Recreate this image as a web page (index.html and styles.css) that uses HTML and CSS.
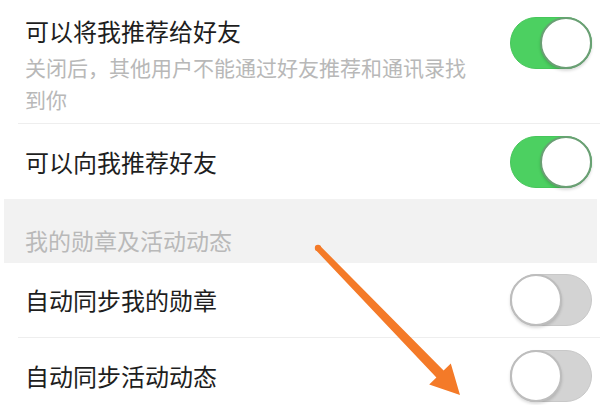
FILE: index.html
```html
<!DOCTYPE html>
<html lang="zh-CN">
<head>
  <meta charset="UTF-8">
  <meta name="viewport" content="width=device-width, initial-scale=1.0">
  <title>隐私设置</title>
  <link rel="stylesheet" href="styles.css">
</head>
<body>

  <div class="page">
    <div class="row row-top">
      <div class="text">
        <div class="title">可以将我推荐给好友</div>
        <div class="desc">关闭后，其他用户不能通过好友推荐和通讯录找到你</div>
      </div>
      <div class="switch on"><span class="knob"></span></div>
    </div>

    <div class="row last">
      <div class="text">
        <div class="title">可以向我推荐好友</div>
      </div>
      <div class="switch on"><span class="knob"></span></div>
    </div>

    <div class="section">我的勋章及活动动态</div>

    <div class="row">
      <div class="text">
        <div class="title">自动同步我的勋章</div>
      </div>
      <div class="switch"><span class="knob"></span></div>
    </div>

    <div class="row last">
      <div class="text">
        <div class="title">自动同步活动动态</div>
      </div>
      <div class="switch"><span class="knob"></span></div>
    </div>

    <!-- 橙色提示箭头 -->
    <svg class="arrow" width="600" height="405" viewBox="0 0 600 405">
      <circle cx="318" cy="248" r="3.2" fill="#f47a28"/>
      <polygon fill="#f47a28" points="320.2,245.9 443.6,370.5 450.8,363.6 460,395 429.2,384.4 436.4,377.5 315.8,250.1"/>
    </svg>
  </div>

</body>
</html>
```

FILE: styles.css
```css
body {
  margin: 0;
  background: #ffffff;
  font-family: "Noto Sans CJK SC", "Noto Sans", sans-serif;
}
.page {
  position: relative;
  width: 600px;
  height: 405px;
  overflow: hidden;
}
.row {
  display: flex;
  align-items: center;
  height: 75px;
  margin-left: 18px;
  padding: 0 8px 0 7px;
  border-bottom: 1px solid #eeeeee;
  box-sizing: border-box;
}
.row.last {
  border-bottom: none;
}
.row-top {
  align-items: flex-start;
  height: 124px;
  padding-top: 15px;
}
.row-top .switch {
  margin-top: 2px;
}
.text {
  flex: 1;
}
.title {
  font-size: 24px;
  line-height: 32px;
  color: #1e1e1e;
}
.desc {
  max-width: 450px;
  font-size: 21px;
  line-height: 32px;
  color: #b8b8b8;
  margin-top: 4px;
}
.section {
  height: 64px;
  margin: 0 3px 0 4px;
  padding: 26px 0 0 21px;
  box-sizing: border-box;
  background-color: #f2f2f2;
  font-size: 23px;
  line-height: 30px;
  color: #b9b9b9;
}
.switch {
  position: relative;
  width: 82px;
  height: 52px;
  border-radius: 26px;
  background-color: #d3d3d3;
  border: 1px solid #c8c8c8;
  box-sizing: border-box;
  flex-shrink: 0;
}
.switch.on {
  background-color: #4cd061;
  border-color: #47c65b;
}
.knob {
  position: absolute;
  top: -1px;
  left: -1px;
  width: 52px;
  height: 52px;
  border-radius: 50%;
  background: #ffffff;
  border: 2px solid #bdbdbd;
  box-sizing: border-box;
  box-shadow: 0 2px 3px rgba(0, 0, 0, 0.15);
}
.switch.on .knob {
  left: auto;
  right: -1px;
  border-color: #6a9f74;
}
.arrow {
  position: absolute;
  top: 0;
  left: 0;
}
```
